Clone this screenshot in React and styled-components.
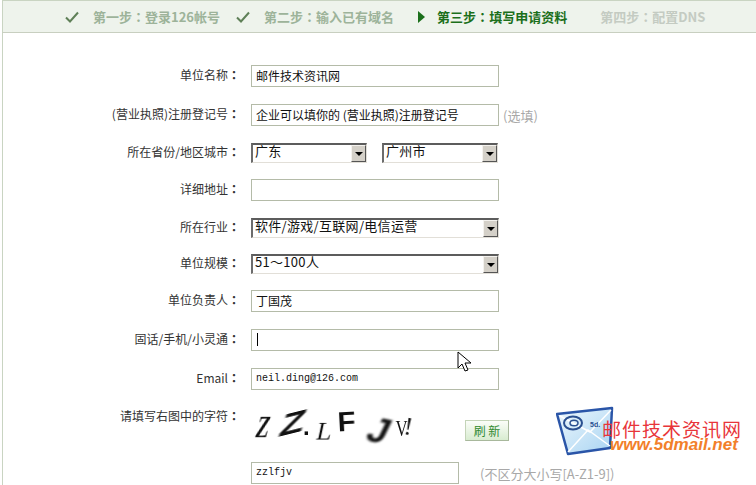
import React from "react";
import styled, { createGlobalStyle } from "styled-components";

const GlobalStyle = createGlobalStyle`
  html, body {
    margin: 0;
    padding: 0;
    background: #fff;
    overflow: hidden;
  }
  body {
    font-family: "Noto Sans CJK SC", "Liberation Sans", sans-serif;
    font-size: 12px;
    color: #222;
  }
`;

const Page = styled.div`
  position: relative;
  width: 756px;
  height: 485px;
  box-sizing: border-box;
  overflow: hidden;
  background: #fff;
  padding-left: 2px;
`;

const Frame = styled.div`
  height: 100%;
  border-left: 1px solid #c9d4c2;
`;

const StepBar = styled.div`
  height: 32px;
  box-sizing: border-box;
  border-top: 1px solid #c9d4c2;
  background: #eef3ec;
  box-shadow: 0 1px 0 #c8cfc0;
  display: flex;
  align-items: center;
  margin-left: -1px;
  border-left: 1px solid #c9d4c2;
`;

const Step = styled.div`
  display: flex;
  align-items: center;
  margin-left: ${(p) => p.$left}px;
  font-size: 13px;
  font-weight: 700;
  line-height: 16px;
  white-space: nowrap;
  color: ${(p) => p.$color};
`;

const StepIcon = styled.svg`
  width: ${(p) => p.$w}px;
  height: 12px;
  margin-right: ${(p) => p.$gap}px;
  flex: none;
`;

const Colon = styled.span`
  font-family: "Noto Sans CJK TC", sans-serif;
  font-weight: 700;
`;

const Form = styled.div`
  padding-top: 33px;
`;

const Row = styled.div`
  display: flex;
  align-items: ${(p) => (p.$top ? "flex-start" : "center")};
  height: ${(p) => p.$h}px;
  margin-bottom: ${(p) => p.$after}px;
`;

const Label = styled.div`
  width: 237px;
  flex: none;
  text-align: right;
  font-size: 12px;
  line-height: 16px;
  color: #333;
  white-space: nowrap;
  padding-top: ${(p) => p.$pad || 0}px;
  padding-bottom: ${(p) => (p.$pad ? 0 : 2)}px;
`;

const Field = styled.div`
  margin-left: 11px;
  width: ${(p) => p.$w}px;
  height: 22px;
  box-sizing: border-box;
  border: 1px solid #b4bba8;
  background: #fff;
  flex: none;
  display: flex;
  align-items: center;
  padding-left: 4px;
  padding-bottom: 1px;
  color: #111;
  white-space: pre;
  font-family: ${(p) => (p.$mono ? '"Liberation Mono", monospace' : "inherit")};
  font-size: ${(p) => (p.$mono ? 10 : 12)}px;
`;

const Caret = styled.span`
  width: 1px;
  height: 13px;
  margin-left: 1px;
  background: #000;
`;

const SelectBox = styled.div`
  margin-left: ${(p) => p.$left}px;
  width: ${(p) => p.$w}px;
  height: 20px;
  box-sizing: border-box;
  flex: none;
  display: flex;
  align-items: stretch;
  background: #fff;
  border-top: 2px solid #5c5c5c;
  border-left: 2px solid #6c6c6c;
  border-right: 1px solid #e2dfd8;
  border-bottom: 1px solid #e2dfd8;
`;

const SelectText = styled.div`
  flex: 1;
  padding-left: 2px;
  font-size: 13px;
  line-height: 12px;
  letter-spacing: 0.3px;
  color: #111;
  white-space: nowrap;
`;

const SelectArrow = styled.div`
  width: 15px;
  flex: none;
  box-sizing: border-box;
  background: #d4d0c8;
  border-top: 1px solid #f4f2ee;
  border-left: 1px solid #f4f2ee;
  border-right: 1px solid #555;
  border-bottom: 1px solid #555;
  display: flex;
  align-items: center;
  justify-content: center;
  &::after {
    content: "";
    border-top: 4px solid #000;
    border-left: 4px solid transparent;
    border-right: 4px solid transparent;
  }
`;

const Hint = styled.span`
  margin-left: ${(p) => p.$left}px;
  color: #a8a8a8;
  font-size: 13px;
  white-space: nowrap;
`;

const Captcha = styled.div`
  position: relative;
  margin-left: 11px;
  width: 200px;
  height: 42px;
  flex: none;
`;

const CaptchaChar = styled.span`
  position: absolute;
  left: ${(p) => p.$x}px;
  top: ${(p) => p.$y}px;
  font-family: ${(p) => (p.$serif ? '"Liberation Serif", serif' : '"Liberation Sans", sans-serif')};
  font-size: ${(p) => p.$size}px;
  font-weight: ${(p) => p.$weight || 700};
  line-height: 1;
  color: #111;
  transform: ${(p) => p.$tf};
  transform-origin: center;
  filter: blur(${(p) => p.$blur || 0}px);
`;

const RefreshButton = styled.button`
  position: absolute;
  left: 214px;
  top: 15px;
  width: 44px;
  height: 21px;
  box-sizing: border-box;
  padding: 0;
  border: 1px solid #c4d4b8;
  border-right-color: #a8b89c;
  border-bottom-color: #a8b89c;
  background: linear-gradient(#fbfdf9, #d8ecd0);
  color: #2f8a2f;
  font-family: inherit;
  font-size: 12px;
  line-height: 18px;
`;

const LogoWrap = styled.div`
  position: absolute;
  left: 556px;
  top: 406px;
  width: 190px;
  height: 52px;
`;

const LogoName = styled.div`
  position: absolute;
  left: 46px;
  top: 14px;
  font-size: 19px;
  line-height: 18px;
  letter-spacing: 1px;
  color: #e8353a;
  white-space: nowrap;
`;

const LogoUrl = styled.div`
  position: absolute;
  left: 54px;
  top: 32px;
  font-family: "Liberation Sans", sans-serif;
  font-size: 17px;
  font-weight: 700;
  font-style: italic;
  line-height: 14px;
  color: #f2802a;
  white-space: nowrap;
`;

const Pointer = styled.svg`
  position: absolute;
  left: 457px;
  top: 351px;
  width: 16px;
  height: 22px;
`;

const Check = () => (
  <StepIcon $w={14} $gap={14} viewBox="0 0 14 12">
    <path d="M1 6.5 L5 10.5 L13 1.5" fill="none" stroke="#5f8058" strokeWidth="2" />
  </StepIcon>
);

const Play = () => (
  <StepIcon $w={7} $gap={12} viewBox="0 0 7 12">
    <path d="M0 0 L7 6 L0 12 Z" fill="#1b6f1b" />
  </StepIcon>
);

const Select = ({ w, left = 11, children }) => (
  <SelectBox $w={w} $left={left}>
    <SelectText>{children}</SelectText>
    <SelectArrow />
  </SelectBox>
);

const captchaChars = [
  { c: "Z", x: 2, y: 6, size: 31, serif: true, tf: "skewX(-14deg) scaleX(.62)" },
  { c: "Z", x: 31, y: 0, size: 36, tf: "rotate(-14deg) skewX(-30deg) scaleX(1.15) scaleY(.8)", blur: 0.7 },
  { c: ".", x: 52, y: 10, size: 24 },
  { c: "L", x: 66, y: 14, size: 25, serif: true, weight: 400, tf: "skewX(-12deg)" },
  { c: "F", x: 87, y: 3, size: 28, tf: "rotate(-3deg) scaleX(1.05)" },
  { c: "J", x: 118, y: 8, size: 36, tf: "rotate(12deg) skewX(-14deg)", blur: 0.8 },
  { c: "V", x: 142, y: 11, size: 24, serif: true, weight: 400, tf: "scaleX(.7)" },
  { c: "!", x: 153, y: 9, size: 26, serif: true, weight: 400, tf: "rotate(10deg)" },
];

const App = () => (
  <Page>
    <GlobalStyle />
    <Frame>
      <StepBar>
        <Step $left={62} $color="#9db39a"><Check />第一步<Colon>：</Colon>登录126帐号</Step>
        <Step $left={16} $color="#9db39a"><Check />第二步<Colon>：</Colon>输入已有域名</Step>
        <Step $left={24} $color="#1b6f1b"><Play />第三步<Colon>：</Colon>填写申请资料</Step>
        <Step $left={33} $color="#c4cbc2">第四步<Colon>：</Colon>配置DNS</Step>
      </StepBar>
      <Form>
        <Row $h={22} $after={17}><Label>单位名称<Colon>：</Colon></Label><Field $w={248}>邮件技术资讯网</Field></Row>
        <Row $h={22} $after={17}>
          <Label>(营业执照)注册登记号<Colon>：</Colon></Label>
          <Field $w={248}>企业可以填你的 (营业执照)注册登记号</Field>
          <Hint $left={4}>(选填)</Hint>
        </Row>
        <Row $h={20} $after={16}>
          <Label>所在省份/地区城市<Colon>：</Colon></Label>
          <Select w={116}>广东</Select>
          <Select w={116} left={15}>广州市</Select>
        </Row>
        <Row $h={22} $after={17}><Label>详细地址<Colon>：</Colon></Label><Field $w={248} /></Row>
        <Row $h={20} $after={16}><Label>所在行业<Colon>：</Colon></Label><Select w={248}>软件/游戏/互联网/电信运营</Select></Row>
        <Row $h={20} $after={16}><Label>单位规模<Colon>：</Colon></Label><Select w={248}>51～100人</Select></Row>
        <Row $h={22} $after={17}><Label>单位负责人<Colon>：</Colon></Label><Field $w={248}>丁国茂</Field></Row>
        <Row $h={22} $after={17}><Label>固话/手机/小灵通<Colon>：</Colon></Label><Field $w={248}><Caret /></Field></Row>
        <Row $h={22} $after={15}><Label>Email<Colon>：</Colon></Label><Field $w={248} $mono>neil.ding@126.com</Field></Row>
        <Row $h={42} $after={15} $top>
          <Label $pad={3}>请填写右图中的字符<Colon>：</Colon></Label>
          <Captcha>
            {captchaChars.map((ch, i) => (
              <CaptchaChar
                key={i}
                $x={ch.x}
                $y={ch.y}
                $size={ch.size}
                $serif={ch.serif}
                $weight={ch.weight}
                $tf={ch.tf}
                $blur={ch.blur}
              >
                {ch.c}
              </CaptchaChar>
            ))}
            <RefreshButton>刷 新</RefreshButton>
          </Captcha>
        </Row>
        <Row $h={22} $after={0}>
          <Label />
          <Field $w={208} $mono>zzlfjv</Field>
          <Hint $left={21}>(不区分大小写[A-Z1-9])</Hint>
        </Row>
      </Form>
    </Frame>
    <LogoWrap>
      <svg width="60" height="50" viewBox="0 0 60 50">
        <defs>
          <linearGradient id="env" x1="0" y1="0" x2="1" y2="1">
            <stop offset="0" stopColor="#eef7fd" />
            <stop offset="1" stopColor="#a8d4f2" />
          </linearGradient>
        </defs>
        <path d="M1 8 L56 2 L54 42 L12 48 Z" fill="url(#env)" stroke="#2a55a8" strokeWidth="2.5" strokeLinejoin="round" />
        <path d="M12 46 L32 24 L54 40" fill="none" stroke="#ffffff" strokeWidth="1.5" />
        <path d="M4 10 L34 26 L55 4" fill="none" stroke="#ffffff" strokeWidth="1.5" />
        <ellipse cx="17" cy="17" rx="9" ry="6.5" fill="none" stroke="#2a4f90" strokeWidth="2" />
        <ellipse cx="18" cy="17" rx="4" ry="2.8" fill="none" stroke="#2a4f90" strokeWidth="1.5" />
        <text x="34" y="21" fontFamily="Liberation Sans, sans-serif" fontSize="7" fontWeight="700" fill="#2a4f90">5d.</text>
      </svg>
      <LogoName>邮件技术资讯网</LogoName>
      <LogoUrl>www.5dmail.net</LogoUrl>
    </LogoWrap>
    <Pointer viewBox="0 0 16 22">
      <path d="M1 1 L1 17 L5 13 L8 20 L11 19 L8 12 L14 12 Z" fill="#fff" stroke="#000" strokeWidth="1" />
    </Pointer>
  </Page>
);

export default App;
